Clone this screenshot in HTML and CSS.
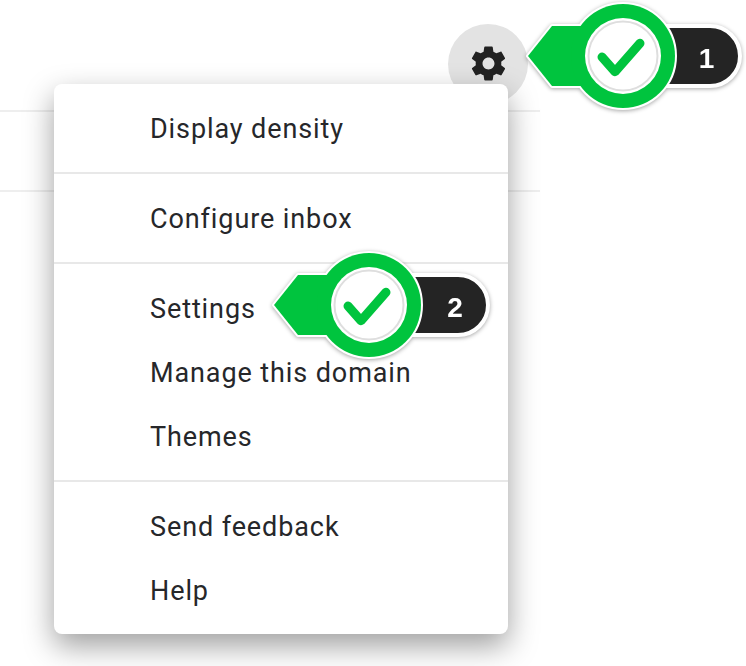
FILE: index.html
```html
<!DOCTYPE html>
<html lang="en">
<head>
    <meta charset="UTF-8">
    <meta name="viewport" content="width=device-width, initial-scale=1.0">
    <title>Settings menu</title>
    <link rel="stylesheet" href="styles.css">
</head>
<body>

<div class="toolbar">
    <div class="gear-button">
        <svg class="gear-icon" viewBox="0 0 24 24">
            <path d="M19.43 12.98c.04-.32.07-.64.07-.98s-.03-.66-.07-.98l2.11-1.65c.19-.15.24-.42.12-.64l-2-3.46c-.12-.22-.39-.3-.61-.22l-2.49 1c-.52-.4-1.08-.73-1.69-.98l-.38-2.65C14.46 2.18 14.25 2 14 2h-4c-.25 0-.46.18-.49.42l-.38 2.65c-.61.25-1.17.59-1.69.98l-2.49-1c-.23-.09-.49 0-.61.22l-2 3.46c-.13.22-.07.49.12.64l2.11 1.65c-.04.32-.07.65-.07.98s.03.66.07.98l-2.11 1.65c-.19.15-.24.42-.12.64l2 3.46c.12.22.39.3.61.22l2.49-1c.52.4 1.08.73 1.69.98l.38 2.65c.03.24.24.42.49.42h4c.25 0 .46-.18.49-.42l.38-2.65c.61-.25 1.17-.59 1.69-.98l2.49 1c.23.09.49 0 .61-.22l2-3.46c.12-.22.07-.49-.12-.64l-2.11-1.65zM12 15.5c-1.93 0-3.5-1.57-3.5-3.5s1.57-3.5 3.5-3.5 3.5 1.57 3.5 3.5-1.57 3.5-3.5 3.5z"/>
        </svg>
    </div>
</div>
<div class="empty-row"></div>

<div class="menu">
    <div class="menu-section">
        <div class="menu-item">Display density</div>
    </div>
    <div class="menu-section">
        <div class="menu-item">Configure inbox</div>
    </div>
    <div class="menu-section">
        <div class="menu-item">Settings</div>
        <div class="menu-item">Manage this domain</div>
        <div class="menu-item">Themes</div>
    </div>
    <div class="menu-section">
        <div class="menu-item">Send feedback</div>
        <div class="menu-item">Help</div>
    </div>
</div>

<!-- Step markers -->
<svg class="marker marker-one" viewBox="0 0 222 112">
    <rect class="marker-pill" x="97" y="24" width="117" height="60" rx="30"/>
    <path class="marker-arrow" d="M2 54 L26 24 H110 V84 H26 Z"/>
    <circle class="marker-edge" cx="97" cy="54" r="52"/>
    <path class="marker-fill" d="M2 54 L26 24 H110 V84 H26 Z"/>
    <circle class="marker-fill" cx="97" cy="54" r="52"/>
    <circle class="marker-inner" cx="97" cy="54" r="38"/>
    <circle class="marker-ring" cx="97" cy="54" r="34.5"/>
    <path class="marker-check" d="M76 55 L89 69.7 L114 41.3"/>
    <text class="marker-number" x="180.5" y="66">1</text>
</svg>
<svg class="marker marker-two" viewBox="0 0 222 112">
    <rect class="marker-pill" x="97" y="24" width="119" height="60" rx="30"/>
    <path class="marker-arrow" d="M2 54 L26 24 H110 V84 H26 Z"/>
    <circle class="marker-edge" cx="97" cy="54" r="52"/>
    <path class="marker-fill" d="M2 54 L26 24 H110 V84 H26 Z"/>
    <circle class="marker-fill" cx="97" cy="54" r="52"/>
    <circle class="marker-inner" cx="97" cy="54" r="38"/>
    <circle class="marker-ring" cx="97" cy="54" r="34.5"/>
    <path class="marker-check" d="M76 55 L89 69.7 L114 41.3"/>
    <text class="marker-number" x="183" y="66">2</text>
</svg>

</body>
</html>
```

FILE: styles.css
```css
body {
    margin: 0;
    padding: 0;
    background-color: #fff;
    font-family: Roboto, Arial, sans-serif;
    overflow: hidden;
}

/* Page behind the menu */
.toolbar {
    width: 540px;
    height: 112px;
    padding: 24px 12px 0 0;
    box-sizing: border-box;
    display: flex;
    justify-content: flex-end;
    border-bottom: 2px solid #eee;
}
.empty-row {
    width: 540px;
    height: 78px;
    border-bottom: 2px solid #eee;
}
.gear-button {
    width: 80px;
    height: 80px;
    border-radius: 50%;
    background-color: #e3e3e3;
    display: flex;
    justify-content: center;
    align-items: center;
}
.gear-icon {
    width: 41px;
    height: 41px;
    margin-top: -2px;
    fill: #222;
}

/* Dropdown */
.menu {
    position: absolute;
    left: 54px;
    top: 84px;
    width: 454px;
    background-color: #fff;
    border-radius: 8px;
    box-shadow: 0 12px 30px rgba(0, 0, 0, 0.38);
}
.menu-section {
    padding: 12px 0;
    border-bottom: 2px solid #e8e8e8;
}
.menu-section:last-child {
    border-bottom: none;
}
.menu-item {
    height: 64px;
    line-height: 66px;
    padding-left: 96px;
    font-size: 27px;
    letter-spacing: 0.9px;
    color: #26272a;
}

/* Step markers */
.marker {
    position: absolute;
    width: 222px;
    height: 112px;
    filter: drop-shadow(0 1px 2px rgba(0, 0, 0, 0.35));
}
.marker-one {
    left: 526px;
    top: 2px;
}
.marker-two {
    left: 272px;
    top: 251px;
}
.marker-pill {
    fill: #242424;
    stroke: #fff;
    stroke-width: 4;
}
.marker-arrow,
.marker-edge {
    fill: #fff;
    stroke: #fff;
    stroke-width: 4;
    stroke-linejoin: round;
}
.marker-fill {
    fill: #00c43e;
}
.marker-inner {
    fill: #fff;
}
.marker-ring {
    fill: none;
    stroke: #dedede;
    stroke-width: 2;
}
.marker-check {
    fill: none;
    stroke: #00c43e;
    stroke-width: 9;
    stroke-linecap: round;
    stroke-linejoin: round;
}
.marker-number {
    font-family: "Liberation Sans", Arial, sans-serif;
    font-size: 28px;
    font-weight: bold;
    fill: #fff;
    text-anchor: middle;
}
```
